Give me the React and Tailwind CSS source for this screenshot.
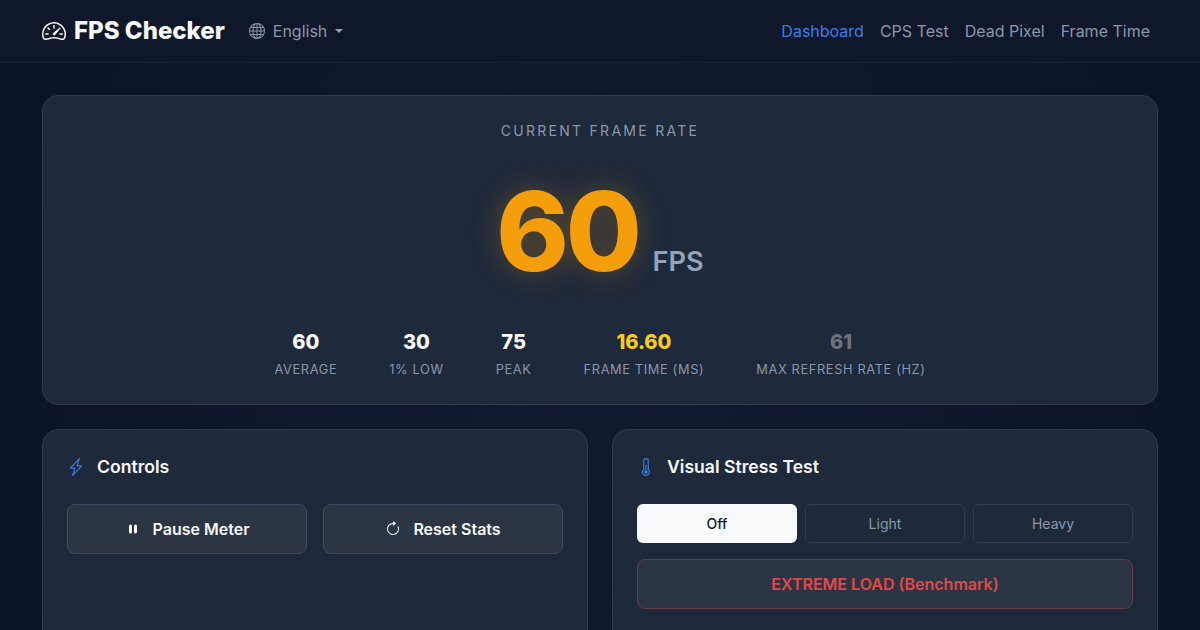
import React from 'react'
import {
  BsSpeedometer2,
  BsGlobe,
  BsLightningCharge,
  BsThermometerHalf,
  BsPauseFill,
  BsArrowClockwise,
} from 'react-icons/bs'

const stats = [
  { value: '60', label: 'AVERAGE', color: 'text-[#f8fafc]' },
  { value: '30', label: '1% LOW', color: 'text-[#f8fafc]' },
  { value: '75', label: 'PEAK', color: 'text-[#f8fafc]' },
  { value: '16.60', label: 'FRAME TIME (MS)', color: 'text-[#facc15]' },
  { value: '61', label: 'MAX REFRESH RATE (HZ)', color: 'text-[#6b7280]' },
]

const navLinks = ['CPS Test', 'Dead Pixel', 'Frame Time']

export default function App() {
  return (
    <div className="h-[630px] overflow-hidden bg-[radial-gradient(circle_at_center,#111b30,#0b1326)] font-['Inter',sans-serif] text-[#f8fafc]">
      {/* Header */}
      <header className="h-[63px] border-b border-[#1a2336] bg-[#0f172a] pl-[42px] pr-[50px] flex items-center justify-between">
        <div className="flex items-center">
          <BsSpeedometer2 className="w-6 h-6 text-[#f8fafc]" />
          <span className="ml-2 text-2xl font-extrabold leading-none">FPS Checker</span>
          <div className="ml-6 flex items-center text-base text-[#8a97ab]">
            <BsGlobe className="w-4 h-4" />
            <span className="ml-2">English</span>
            <span className="ml-2 w-0 h-0 border-x-4 border-x-transparent border-t-4 border-t-[#94a3b8]" />
          </div>
        </div>
        <nav className="flex gap-4 text-base">
          <a className="text-[#3b7de8]">Dashboard</a>
          {navLinks.map((link) => (
            <a key={link} className="text-[#8a97ab]">{link}</a>
          ))}
        </nav>
      </header>

      {/* Main content */}
      <main className="px-[42px] pt-8">
        <section className="h-[310px] rounded-2xl border border-[#2e3a4d] bg-[#1e293b] pt-[25px] flex flex-col items-center">
          <p className="text-sm leading-5 tracking-[2.27px] text-[#8a97ab]">CURRENT FRAME RATE</p>
          <div className="mt-[34px] h-[112px] flex items-baseline">
            <span className="text-[110px] leading-[112px] tracking-[-3.3px] font-extrabold text-[#f59e0b] [text-shadow:0_0_30px_rgba(245,158,11,0.3)]">60</span>
            <span className="ml-[14px] text-[27.2px] font-semibold text-[#94a3b8]">FPS</span>
          </div>
          <div className="mt-[41px] flex gap-[52px]">
            {stats.map((stat) => (
              <div key={stat.label} className="flex flex-col items-center">
                <span className={`text-xl leading-7 font-extrabold ${stat.color}`}>{stat.value}</span>
                <span className="mt-[6px] text-[12.8px] leading-4 tracking-[0.64px] text-[#8a97ab]">{stat.label}</span>
              </div>
            ))}
          </div>
        </section>

        <div className="mt-6 grid grid-cols-2 gap-6">
          {/* Controls */}
          <section className="h-[240px] rounded-2xl border border-[#2e3a4d] bg-[#1e293b] p-6">
            <h2 className="h-[26px] flex items-center text-[17.6px] font-semibold">
              <BsLightningCharge className="w-[18px] h-[18px] text-[#3b7de8]" />
              <span className="ml-3">Controls</span>
            </h2>
            <div className="mt-6 grid grid-cols-2 gap-4">
              <button className="h-[50px] rounded-lg border border-[#3d4a5e] bg-[#2b3544] flex items-center justify-center font-semibold">
                <BsPauseFill className="w-4 h-4" />
                <span className="ml-3">Pause Meter</span>
              </button>
              <button className="h-[50px] rounded-lg border border-[#3d4a5e] bg-[#2b3544] flex items-center justify-center font-semibold">
                <BsArrowClockwise className="w-4 h-4" />
                <span className="ml-3">Reset Stats</span>
              </button>
            </div>
          </section>

          {/* Visual Stress Test */}
          <section className="h-[240px] rounded-2xl border border-[#2e3a4d] bg-[#1e293b] p-6">
            <h2 className="h-[26px] flex items-center text-[17.6px] font-semibold">
              <BsThermometerHalf className="w-[18px] h-[18px] text-[#3b7de8]" />
              <span className="ml-3">Visual Stress Test</span>
            </h2>
            <div className="mt-6 grid grid-cols-3 gap-2">
              <button className="h-[39px] rounded-md bg-[#f8fafc] text-sm font-medium text-[#0f172a]">Off</button>
              <button className="h-[39px] rounded-md border border-[#303c50] text-sm text-[#8a97ab]">Light</button>
              <button className="h-[39px] rounded-md border border-[#303c50] text-sm text-[#8a97ab]">Heavy</button>
            </div>
            <button className="mt-4 w-full h-[50px] rounded-lg border border-[#653a45] bg-[#2b3544] font-semibold text-[#e04848]">
              EXTREME LOAD (Benchmark)
            </button>
          </section>
        </div>
      </main>
    </div>
  )
}
